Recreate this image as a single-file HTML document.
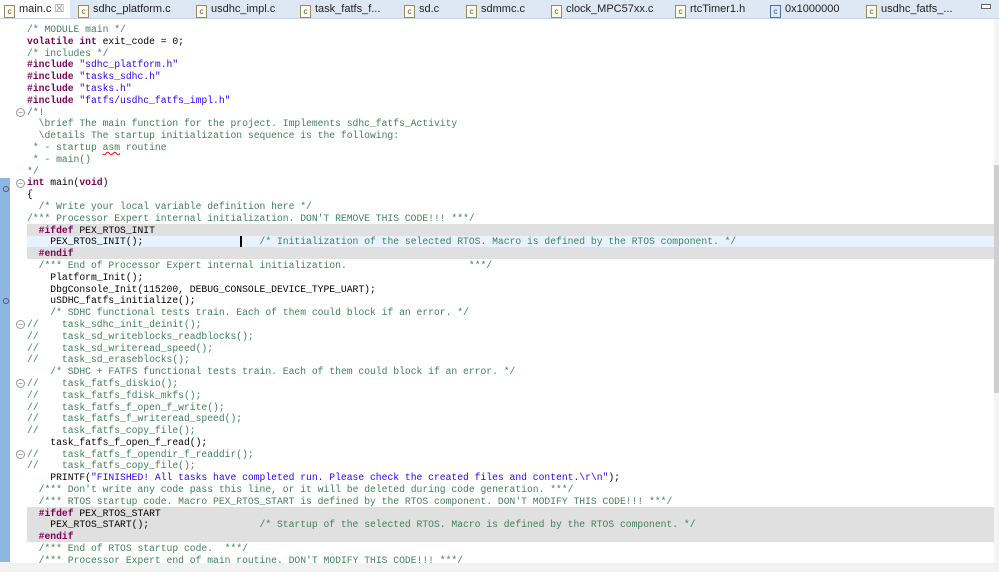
<!DOCTYPE html>
<html><head><meta charset="utf-8"><style>
body{margin:0;width:999px;height:572px;overflow:hidden;background:#fff;position:relative;font-family:"Liberation Sans",sans-serif}
.tabs{position:absolute;left:0;top:0;width:999px;height:18px;background:#dde8f4;border-bottom:1px solid #c5d3e3}
.tab{position:absolute;top:0;height:18px;font-size:11px;line-height:19px;color:#222;white-space:nowrap}
.tab i{display:inline-block;width:9px;height:11px;border:1px solid #9a8a60;background:#fffbe8;vertical-align:-2px;margin-right:4px;font-style:normal;font-size:8px;line-height:11px;text-align:center;color:#556}
.act{background:#fff;left:0;width:70px;padding-left:4px;box-sizing:border-box}
.code{position:absolute;left:27px;top:24px;font-family:"Liberation Mono",monospace;font-size:9.7px;line-height:11.8px;white-space:pre;color:#000}
.c{color:#3f7f5f}.k{color:#7f0055;font-weight:bold}.s{color:#2a00ff}
.bar{position:absolute;left:0;top:178px;width:10px;height:384px;background:#8cb6e4}
.hl{position:absolute;left:27px;width:967px;height:11.8px}
.f{position:absolute;left:16px;width:7px;height:7px;border:1px solid #999;border-radius:50%;font-size:8px;line-height:7px;text-align:center;color:#666}
</style></head><body>
<div class="tabs">
<div class="tab act"><i>c</i>main.c <span style="color:#888">☒</span></div>
<div class="tab" style="left:78px"><i>c</i>sdhc_platform.c</div>
<div class="tab" style="left:196px"><i>c</i>usdhc_impl.c</div>
<div class="tab" style="left:300px"><i>c</i>task_fatfs_f...</div>
<div class="tab" style="left:404px"><i>c</i>sd.c</div>
<div class="tab" style="left:466px"><i>c</i>sdmmc.c</div>
<div class="tab" style="left:551px"><i>c</i>clock_MPC57xx.c</div>
<div class="tab" style="left:675px"><i>c</i>rtcTimer1.h</div>
<div class="tab" style="left:770px"><i style="background:#dfe8f6;border-color:#4a6fa5">c</i>0x1000000</div>
<div class="tab" style="left:866px"><i>c</i>usdhc_fatfs_...</div>
<div style="position:absolute;left:981px;top:4px;width:8px;height:3px;border:1px solid #666;background:#fff"></div>
</div>
<div class="bar"></div>
<div style="position:absolute;left:994px;top:19px;width:5px;height:545px;background:#f4f4f4"></div>
<div style="position:absolute;left:994px;top:165px;width:5px;height:228px;background:#cfcfcf"></div>
<div style="position:absolute;left:0;top:563px;width:999px;height:9px;background:#f2f2f2"></div>
<div class="hl" style="top:224px;background:#e0e0e0"></div>
<div class="hl" style="top:235.6px;background:#e8f2fe"></div>
<div class="hl" style="top:247.4px;background:#e0e0e0"></div>
<div class="hl" style="top:507px;height:35.4px;background:#e0e0e0"></div>
<div style="position:absolute;left:240px;top:236px;width:2px;height:11px;background:#000"></div>
<div class="f" style="top:108px">−</div>
<div class="f" style="top:179px">−</div>
<div class="f" style="top:320px">−</div>
<div class="f" style="top:379px">−</div>
<div class="f" style="top:450px">−</div>
<div style="position:absolute;left:3px;top:186px;width:4px;height:4px;border:1px solid #557;border-radius:50%"></div>
<div style="position:absolute;left:3px;top:298px;width:4px;height:4px;border:1px solid #557;border-radius:50%"></div>
<div class="code"><span class="c">/* MODULE main */</span>
<span class="k">volatile int</span> exit_code = 0;
<span class="c">/* includes */</span>
<span class="k">#include</span> <span class="s">"sdhc_platform.h"</span>
<span class="k">#include</span> <span class="s">"tasks_sdhc.h"</span>
<span class="k">#include</span> <span class="s">"tasks.h"</span>
<span class="k">#include</span> <span class="s">"fatfs/usdhc_fatfs_impl.h"</span>
<span class="c">/*!
  \brief The main function for the project. Implements sdhc_fatfs_Activity
  \details The startup initialization sequence is the following:
 * - startup <u style="text-decoration-color:red;text-decoration-style:wavy">asm</u> routine
 * - main()
*/</span>
<span class="k">int</span> main(<span class="k">void</span>)
{
  <span class="c">/* Write your local variable definition here */</span>
<span class="c">/*** Processor Expert internal initialization. DON'T REMOVE THIS CODE!!! ***/</span>
  <span class="k">#ifdef</span> PEX_RTOS_INIT
    PEX_RTOS_INIT();                    <span class="c">/* Initialization of the selected RTOS. Macro is defined by the RTOS component. */</span>
  <span class="k">#endif</span>
  <span class="c">/*** End of Processor Expert internal initialization.                     ***/</span>
    Platform_Init();
    DbgConsole_Init(115200, DEBUG_CONSOLE_DEVICE_TYPE_UART);
    uSDHC_fatfs_initialize();
    <span class="c">/* SDHC functional tests train. Each of them could block if an error. */</span>
<span class="c">//    task_sdhc_init_deinit();</span>
<span class="c">//    task_sd_writeblocks_readblocks();</span>
<span class="c">//    task_sd_writeread_speed();</span>
<span class="c">//    task_sd_eraseblocks();</span>
    <span class="c">/* SDHC + FATFS functional tests train. Each of them could block if an error. */</span>
<span class="c">//    task_fatfs_diskio();</span>
<span class="c">//    task_fatfs_fdisk_mkfs();</span>
<span class="c">//    task_fatfs_f_open_f_write();</span>
<span class="c">//    task_fatfs_f_writeread_speed();</span>
<span class="c">//    task_fatfs_copy_file();</span>
    task_fatfs_f_open_f_read();
<span class="c">//    task_fatfs_f_opendir_f_readdir();</span>
<span class="c">//    task_fatfs_copy_file();</span>
    PRINTF(<span class="s">"FINISHED! All tasks have completed run. Please check the created files and content.\r\n"</span>);
  <span class="c">/*** Don't write any code pass this line, or it will be deleted during code generation. ***/</span>
  <span class="c">/*** RTOS startup code. Macro PEX_RTOS_START is defined by the RTOS component. DON'T MODIFY THIS CODE!!! ***/</span>
  <span class="k">#ifdef</span> PEX_RTOS_START
    PEX_RTOS_START();                   <span class="c">/* Startup of the selected RTOS. Macro is defined by the RTOS component. */</span>
  <span class="k">#endif</span>
  <span class="c">/*** End of RTOS startup code.  ***/</span>
  <span class="c">/*** Processor Expert end of main routine. DON'T MODIFY THIS CODE!!! ***/</span></div>
</body></html>
